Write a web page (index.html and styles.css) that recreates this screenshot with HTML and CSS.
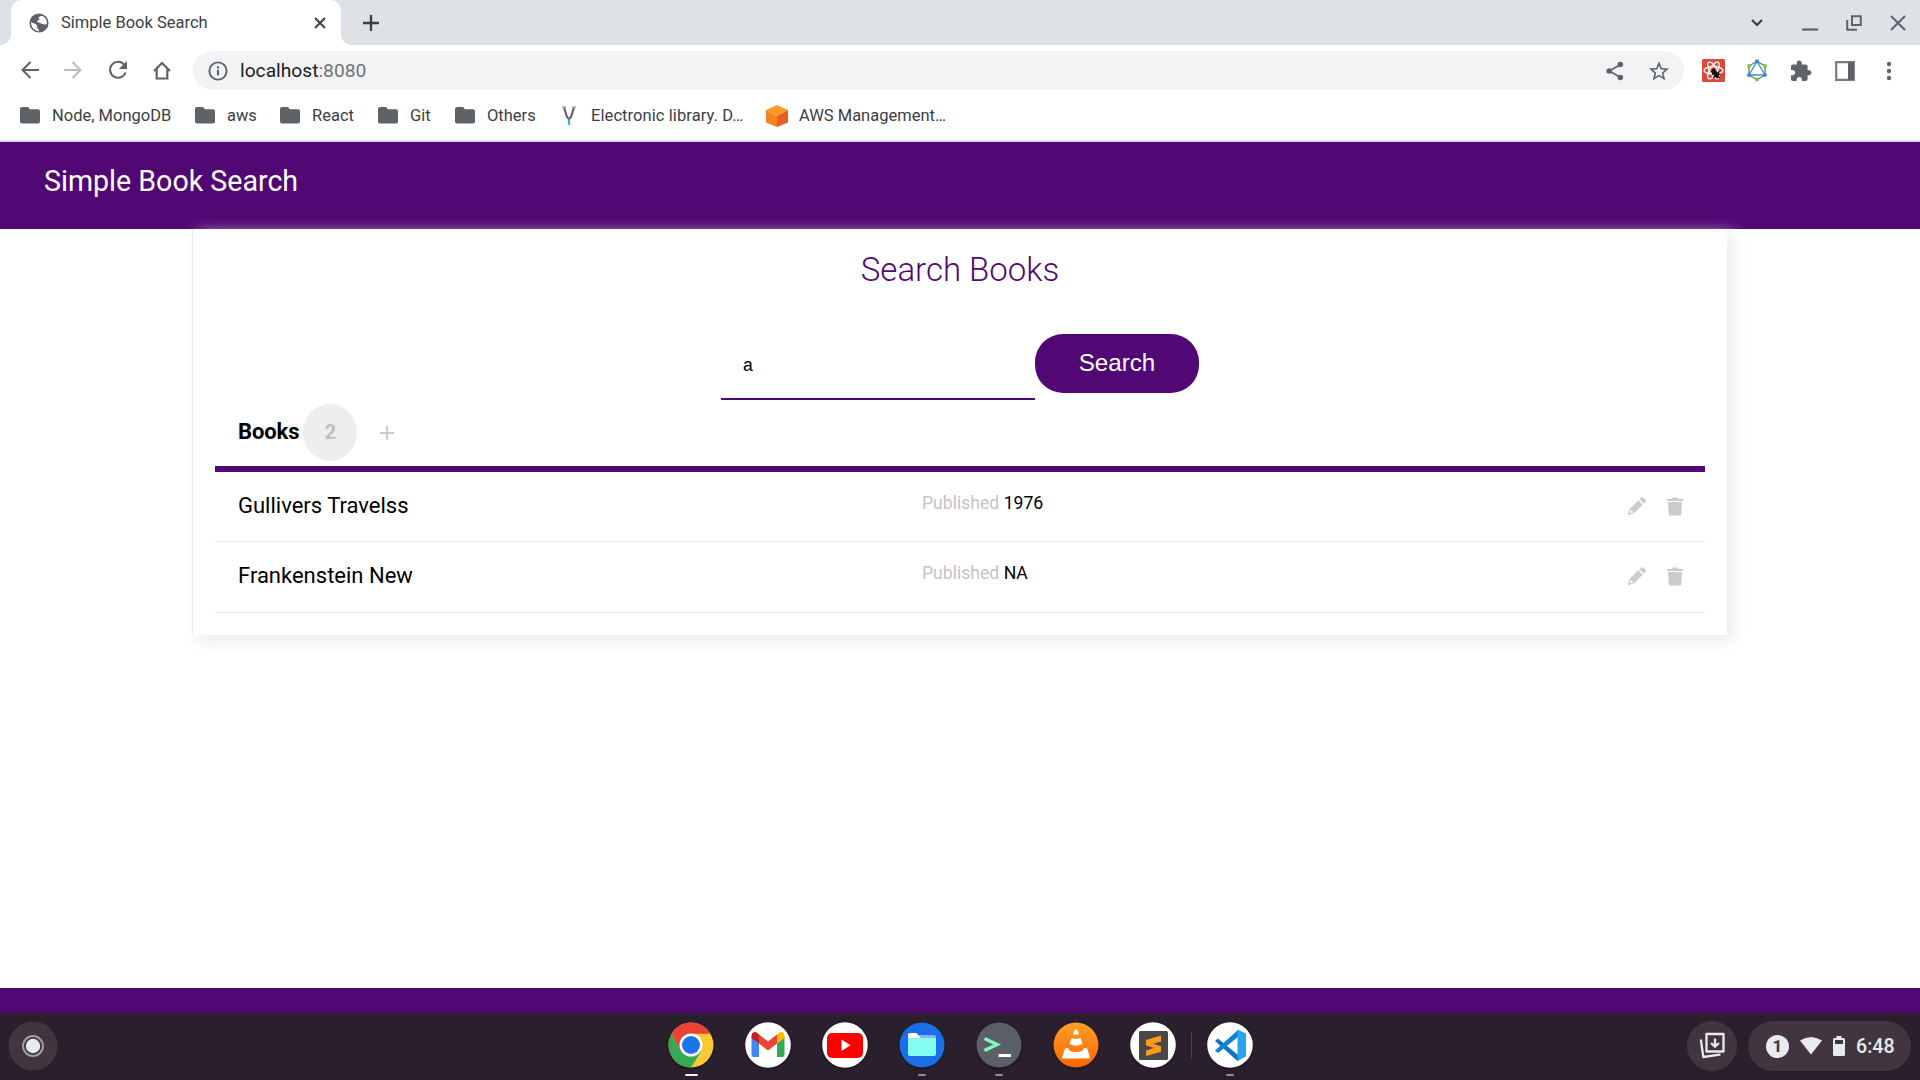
FILE: index.html
```html
<!DOCTYPE html>
<html lang="en">
<head>
<meta charset="utf-8">
<title>Simple Book Search</title>
<link rel="stylesheet" href="styles.css">
</head>
<body>
<div class="browser">
  <div class="tabstrip">
    <div class="tab">
      <svg class="globe" viewBox="0 0 20 20"><circle cx="10" cy="10" r="9.600" fill="#5f6368"/><path d="M2 9.300c1.500 1 4.200 1 5.700 2.600.9 1-.2 2.500.8 3.400.7.700 1.500 1 1.500 2.900C5.500 18 2 14.400 2 9.300zM9.600 4.100c1.500-.4 2.300-1.200 3.700-1.300 2.800 1.500 4.500 4.200 4.700 7.200-.6 1.200-1.700 1.900-3 1.400-1.500-.6-2.600-.4-3.700-1.300-.8-.8-2.300-.4-3-1.400-.6-1.200 1.400-1.500 2.200-2.300.5-.8-1.500-.9-.9-2.300z" fill="#fff"/></svg>
      <span class="tab-title">Simple Book Search</span>
      <svg class="tab-close" viewBox="0 0 12 12"><path d="M1 1l10 10M11 1L1 11" stroke="#3c4043" stroke-width="2"/></svg>
    </div>
    <svg class="new-tab" viewBox="0 0 18 18"><path d="M9 1v16M1 9h16" stroke="#3c4043" stroke-width="2.300"/></svg>
    <div class="window-controls">
      <svg width="14" height="10" viewBox="0 0 14 10"><path d="M2 2l5 5 5-5" fill="none" stroke="#3c4043" stroke-width="2.200"/></svg>
      <svg class="minimize" width="16" height="16" viewBox="0 0 16 16"><path d="M0 14.500h16" stroke="#5f6368" stroke-width="2.200"/></svg>
      <svg class="restore" width="16" height="16" viewBox="0 0 16 16"><path d="M6 1.200h8.800V10H6zM1.200 5v9.800H11" fill="none" stroke="#5f6368" stroke-width="2"/></svg>
      <svg class="close" width="16" height="16" viewBox="0 0 16 16"><path d="M1 1l14 14M15 1L1 15" stroke="#5f6368" stroke-width="2"/></svg>
    </div>
  </div>
  <div class="toolbar">
    <div class="nav">
      <svg width="18" height="18" viewBox="0 0 18 18"><path d="M18 9H1.500M9.500 1l-8 8 8 8" fill="none" stroke="#5f6368" stroke-width="2"/></svg>
      <svg width="18" height="18" viewBox="0 0 18 18"><path d="M0 9h16.500M8.500 1l8 8-8 8" fill="none" stroke="#babcbe" stroke-width="2"/></svg>
      <svg width="20" height="20" viewBox="0 0 20 20"><path d="M16.500 5A8 8 0 1 0 17.600 12.500" fill="none" stroke="#5f6368" stroke-width="2.100"/><path d="M19 1v8h-8z" fill="#5f6368"/></svg>
      <svg width="18" height="19" viewBox="0 0 18 19"><path d="M1 10l8-8 8 8M3.700 8v9.500h10.600V8" fill="none" stroke="#5f6368" stroke-width="2.200"/></svg>
    </div>
    <div class="omnibox">
      <svg width="20" height="20" viewBox="0 0 20 20"><circle cx="10" cy="10" r="8.600" fill="none" stroke="#5f6368" stroke-width="1.900"/><path d="M10 8.800v5.500M10 5.300v2.200" stroke="#5f6368" stroke-width="2.100"/></svg>
      <span class="url">localhost<span class="port">:8080</span></span>
      <svg class="share" width="18" height="20" viewBox="0 0 18 20"><path d="M14.500 3.500L3.500 10l11 6.500" fill="none" stroke="#5f6368" stroke-width="1.700"/><g fill="#5f6368"><circle cx="14.300" cy="3.500" r="2.800"/><circle cx="3.200" cy="10" r="2.800"/><circle cx="14.300" cy="16.500" r="2.800"/></g></svg>
      <svg width="20" height="20" viewBox="0 0 24 24"><path d="M22 9.240l-7.190-.62L12 2 9.190 8.630 2 9.240l5.460 4.730L5.820 21 12 17.270 18.180 21l-1.630-7.030L22 9.240zM12 15.400l-3.760 2.270 1-4.280-3.320-2.880 4.380-.38L12 6.100l1.710 4.040 4.380.38-3.320 2.880 1 4.280L12 15.400z" transform="translate(-2.400 -2) scale(1.200)" fill="#5f6368"/></svg>
    </div>
    <div class="extensions">
      <svg width="23" height="23" viewBox="0 0 23 23"><rect width="23" height="23" rx="1.500" fill="#de4a3a"/><g fill="none" stroke="#fff" stroke-width="1.300"><ellipse cx="11.500" cy="11.500" rx="9.500" ry="3.800"/><ellipse cx="11.500" cy="11.500" rx="9.500" ry="3.800" transform="rotate(60 11.500 11.500)"/><ellipse cx="11.500" cy="11.500" rx="9.500" ry="3.800" transform="rotate(120 11.500 11.500)"/></g><path d="M9 12l9 7M12.500 11l-2.500 5M17 12l-2 7.500M11.500 19l2.500-5 4.500 1.500" stroke="#111" stroke-width="1.200"/><ellipse cx="13.800" cy="15" rx="2.200" ry="4.200" transform="rotate(-40 13.800 15)" fill="#111"/><circle cx="11.500" cy="11" r="1.600" fill="#111"/></svg>
      <svg width="22" height="23" viewBox="0 0 22 23"><path d="M11 2.500L19 7v9l-8 4.800L3 16V7z" fill="none" stroke="#777" stroke-width="1.300"/><path d="M11 2.500L19 16H3z" fill="none" stroke="#3a93d1" stroke-width="1.400"/><g fill="#2f8fd3"><circle cx="11" cy="2.300" r="2"/><circle cx="3" cy="16" r="2"/><circle cx="19" cy="16" r="2"/></g><g fill="#76c650"><circle cx="3" cy="7" r="2"/><circle cx="19" cy="7" r="2"/><circle cx="11" cy="20.600" r="2"/></g></svg>
      <svg width="22" height="22" viewBox="1 0.500 22.500 22.500"><path d="M20.500 11H19V7c0-1.100-.9-2-2-2h-4V3.500a2.500 2.500 0 0 0-5 0V5H4c-1.100 0-1.990.9-1.990 2v3.800H3.500c1.490 0 2.700 1.210 2.700 2.700s-1.210 2.700-2.700 2.700H2V20c0 1.100.9 2 2 2h3.800v-1.500c0-1.490 1.210-2.700 2.700-2.700s2.700 1.210 2.700 2.700V22H17c1.100 0 2-.9 2-2v-4h1.500a2.500 2.500 0 0 0 0-5z" fill="#5f6368"/></svg>
      <svg width="20" height="20" viewBox="0 0 20 20"><path d="M1.200 1.200h17.600v17.600H1.200z" fill="#fff" stroke="#777b80" stroke-width="2.200"/><path d="M13 1h6v18h-6z" fill="#5f6368"/></svg>
      <svg width="6" height="20" viewBox="0 0 6 20"><g fill="#5f6368"><circle cx="3" cy="3" r="2.200"/><circle cx="3" cy="10" r="2.200"/><circle cx="3" cy="17" r="2.200"/></g></svg>
    </div>
  </div>
  <div class="bookmarks">
    <span class="bookmark b-node"><svg class="folder" viewBox="0 0 20 17"><path d="M2 0h6l2 2.300h8a2 2 0 0 1 2 2V14.500a2 2 0 0 1-2 2H2a2 2 0 0 1-2-2V2a2 2 0 0 1 2-2z"/></svg>Node, MongoDB</span>
    <span class="bookmark b-aws"><svg class="folder" viewBox="0 0 20 17"><path d="M2 0h6l2 2.300h8a2 2 0 0 1 2 2V14.500a2 2 0 0 1-2 2H2a2 2 0 0 1-2-2V2a2 2 0 0 1 2-2z"/></svg>aws</span>
    <span class="bookmark b-react"><svg class="folder" viewBox="0 0 20 17"><path d="M2 0h6l2 2.300h8a2 2 0 0 1 2 2V14.500a2 2 0 0 1-2 2H2a2 2 0 0 1-2-2V2a2 2 0 0 1 2-2z"/></svg>React</span>
    <span class="bookmark b-git"><svg class="folder" viewBox="0 0 20 17"><path d="M2 0h6l2 2.300h8a2 2 0 0 1 2 2V14.500a2 2 0 0 1-2 2H2a2 2 0 0 1-2-2V2a2 2 0 0 1 2-2z"/></svg>Git</span>
    <span class="bookmark b-others"><svg class="folder" viewBox="0 0 20 17"><path d="M2 0h6l2 2.300h8a2 2 0 0 1 2 2V14.500a2 2 0 0 1-2 2H2a2 2 0 0 1-2-2V2a2 2 0 0 1 2-2z"/></svg>Others</span>
    <span class="bookmark b-library"><svg width="14" height="20" viewBox="0 0 14 20"><path d="M2 1.500l3 9.500 2 2 2-2 3-9.500" fill="none" stroke="#666" stroke-width="2.200"/><path d="M0 1h4M10 1h4" stroke="#888"/><path d="M7 13.800v5.200" stroke="#36b3de" stroke-width="2.400"/></svg>Electronic library. D…</span>
    <span class="bookmark b-console"><svg width="22" height="22" viewBox="0 0 22 22"><path d="M11 0l11 5-11 6L0 5z" fill="#fb9a2c"/><path d="M0 5l11 6v11L0 17.500z" fill="#f58320"/><path d="M22 5l-11 6v11l11-4.500z" fill="#ea5f20"/></svg>AWS Management…</span>
  </div>
</div>
<div class="page">
  <header class="site-header">Simple Book Search</header>
  <main class="card">
    <h1 class="heading">Search Books</h1>
    <form class="search-form">
      <input class="search-input" type="text" value="a">
      <button class="search-button" type="button">Search</button>
    </form>
    <div class="list-head">
      <span class="list-title">Books</span>
      <span class="count">2</span>
      <svg class="add" viewBox="0 0 14 14"><path d="M7 0v14M0 7h14" stroke="#ccc" stroke-width="2"/></svg>
    </div>
    <div class="book">
      <span class="book-title">Gullivers Travelss</span>
      <span class="published">Published <span class="year">1976</span></span>
      <span class="actions">
        <svg class="pencil" viewBox="0 0 18 18"><path d="M10.300 3.300l4.400 4.400-8.500 8.500L1 18H0v-1l1.600-5z"/><path d="M11.500 2.200L13 .8q1.300-1.300 2.700 0l1.600 1.600q1.300 1.300 0 2.700l-1.500 1.400z"/><path d="M2.500 12.800l2.700 2.700-2 .7-1.400-1.400z" fill="#fff"/></svg>
        <svg class="trash" viewBox="0 0 16 19"><path d="M1 5h14l-.7 12q-.1 1.500-1.600 1.500H3.300q-1.500 0-1.600-1.500zM0 2h4.500L5.300.4h5.400l.8 1.600H16v1.900H0z"/></svg>
      </span>
    </div>
    <div class="book">
      <span class="book-title">Frankenstein New</span>
      <span class="published">Published <span class="year">NA</span></span>
      <span class="actions">
        <svg class="pencil" viewBox="0 0 18 18"><path d="M10.300 3.300l4.400 4.400-8.500 8.500L1 18H0v-1l1.600-5z"/><path d="M11.500 2.200L13 .8q1.300-1.300 2.700 0l1.600 1.600q1.300 1.300 0 2.700l-1.500 1.400z"/><path d="M2.500 12.800l2.700 2.700-2 .7-1.400-1.400z" fill="#fff"/></svg>
        <svg class="trash" viewBox="0 0 16 19"><path d="M1 5h14l-.7 12q-.1 1.500-1.600 1.500H3.300q-1.500 0-1.600-1.500zM0 2h4.500L5.300.4h5.400l.8 1.600H16v1.900H0z"/></svg>
      </span>
    </div>
  </main>
  <footer class="site-footer"></footer>
</div>
<div class="shelf">
  <div class="shelf-left">
    <svg class="launcher" viewBox="0 0 50 50"><circle cx="25" cy="25" r="24.500" fill="#41363f"/><circle cx="25" cy="25" r="10" fill="none" stroke="#a09ca1" stroke-width="2"/><circle cx="25" cy="25" r="7.200" fill="#e8eaed"/></svg>
  </div>
  <div class="apps">
    <div class="app active"><svg viewBox="0 0 46 46"><circle cx="23" cy="23" r="22.500" fill="#fbc934"/><path d="M23 23L12.600 29 3.500 12A22.500 22.500 0 0 0 23 45.500l10.400-16.500z" fill="#34a853"/><path d="M3.500 11.800a22.500 22.500 0 0 1 39-.1H23L12.600 29z" fill="#ea4335"/><circle cx="23" cy="23" r="11.500" fill="#fff"/><circle cx="23" cy="23" r="9" fill="#1a73e8"/></svg></div>
    <div class="app"><svg viewBox="0 0 46 46"><circle cx="23" cy="23" r="22.800" fill="#fff"/><path d="M6.500 15l7.500 5.500V35H9q-2.500 0-2.500-2.500z" fill="#4285f4"/><path d="M39.500 15L32 20.500V35h5q2.500 0 2.500-2.500z" fill="#34a853"/><path d="M14 12.500l9 7 9-7v9l-9 7-9-7z" fill="#ea4335"/><path d="M6.500 16v-2q0-4 4-4 1.500 0 3.500 2.500v9z" fill="#c5221f"/><path d="M39.500 16v-2q0-4-4-4-1.500 0-3.500 2.500v9z" fill="#fbbc04"/></svg></div>
    <div class="app"><svg viewBox="0 0 46 46"><circle cx="23" cy="23" r="22.800" fill="#fff"/><rect x="5" y="11" width="36" height="25" rx="5" fill="#f00"/><path d="M19.500 17.500v11.500l9-5.800z" fill="#fff"/></svg></div>
    <div class="app open"><svg viewBox="0 0 46 46"><circle cx="23" cy="23" r="22.500" fill="#1a6fe6"/><path d="M20 13h15q2 0 2 2v4H20z" fill="#86b3f8"/><path d="M9 17v-4q0-2 2-2h6.500l4 4.500V18z" fill="#fff"/><path d="M9 16h28v16q0 2-2 2H11q-2 0-2-2z" fill="#83fcf2"/></svg></div>
    <div class="app open"><svg viewBox="0 0 46 46"><circle cx="23" cy="23" r="22.500" fill="#5a6066"/><path d="M8.500 16.500l12.500 6-12.500 6" fill="none" stroke="#80f7c0" stroke-width="3.500"/><path d="M22.500 33.500H35" stroke="#fff" stroke-width="3"/></svg></div>
    <div class="app"><svg viewBox="0 0 46 46"><defs><linearGradient id="orange" x1="0" y1="0" x2="0" y2="1"><stop stop-color="#ffa029"/><stop offset="1" stop-color="#ff6500"/></linearGradient></defs><circle cx="23" cy="23" r="22.500" fill="url(#orange)"/><g fill="#fff"><path d="M21 9.500q2-5 4 0l1 2.500q-3 1.500-6 0z"/><path d="M18.500 16q4.500 2 9 0l2 6q-6.500 3.500-13 0z"/><path d="M14 26h1.200q0 4 7.800 4t7.800-4H33q1 0 1.500 1.500l2.500 8q.3 1-1 1H10q-1.300 0-1-1l2.500-8Q12 26 14 26z"/></g></svg></div>
    <div class="app"><svg viewBox="0 0 46 46"><circle cx="23" cy="23" r="22.800" fill="#fff"/><rect x="9" y="9" width="29" height="29" rx="1.500" fill="#484848"/><path d="M16 18l15-4.500v6l-8 2.200 8 2.500v5.500L16 34v-5.500l8-2.500-8-2.500z" fill="#ff9a1f"/></svg></div>
    <div class="divider"></div>
    <div class="app open"><svg viewBox="0 0 46 46"><circle cx="23" cy="23" r="22.800" fill="#fff"/><path d="M8 19l3-2.500L31 33v6.500z" fill="#0b74c4"/><path d="M8 28.500l3 2.500L31 15V8z" fill="#1082d2"/><path d="M30.500 7.500l8.500 4v23l-8.500 4.500z" fill="#2aa2f0"/></svg></div>
  </div>
  <div class="tray">
    <svg class="holding" viewBox="0 0 50 50"><circle cx="25" cy="25" r="25" fill="#41363f"/><path d="M19.500 13h17v17.500h-17zM14 19.500l2.300 16.500 16.200-2.300" fill="none" stroke="#e8eaed" stroke-width="2.300" stroke-linejoin="round" stroke-linecap="round"/><path d="M28 17.500v8M24 22l4 3.700 4-3.700" fill="none" stroke="#e8eaed" stroke-width="2.300"/></svg>
    <div class="status">
      <span class="badge">1</span>
      <svg class="wifi" viewBox="0 0 22 18"><path d="M0 3.500Q11-3.500 22 3.500L11 17.500z" fill="#e8eaed"/></svg>
      <svg class="battery" viewBox="0 0 12 20"><path d="M3.500 0h5v2H10.500q1.500 0 1.500 1.500v15q0 1.500-1.500 1.500h-9Q0 20 0 18.500v-15Q0 2 1.500 2h2zM2 4v4h8V4z" fill="#e8eaed" fill-rule="evenodd"/></svg>
      <span class="clock">6:48</span>
    </div>
  </div>
</div>
</body>
</html>
```
FILE: styles.css
```css
* { box-sizing: border-box; }
body {
  margin: 0;
  width: 1920px;
  height: 1080px;
  overflow: hidden;
  display: flex;
  flex-direction: column;
  font-family: Roboto, "Liberation Sans", sans-serif;
  background: #fff;
}
svg { display: block; flex: none; }

.browser { height: 142px; border-bottom: 2px solid #dadce0; background: #fff; color: #3c4043; }
.tabstrip { height: 45px; display: flex; align-items: center; background: #dee1e6; padding-left: 11px; }
.tab {
  width: 330px;
  height: 45px;
  display: flex;
  align-items: center;
  padding: 0 15.500px 0 18px;
  background: #fff;
  border-radius: 10px 10px 0 0;
  position: relative;
}
.tab::before, .tab::after {
  content: "";
  position: absolute;
  bottom: 0;
  width: 10px;
  height: 10px;
}
.tab::before { left: -10px; background: radial-gradient(circle at 0 0, transparent 9.500px, #fff 10px); }
.tab::after { right: -10px; background: radial-gradient(circle at 100% 0, transparent 9.500px, #fff 10px); }
.globe { width: 20px; height: 20px; margin-right: 12px; }
.tab-title { font-size: 16.500px; flex: 1; }
.tab-close { width: 12px; height: 12px; }
.new-tab { width: 18px; height: 18px; margin-left: 21px; }
.window-controls { margin-left: auto; display: flex; align-items: center; padding-right: 14px; }
.minimize { margin-left: 38px; }
.restore { margin-left: 28px; }
.close { margin-left: 28px; }

.toolbar { height: 51px; display: flex; align-items: center; }
.nav { width: 193px; padding: 0 22px 1px 21px; display: flex; align-items: center; justify-content: space-between; }
.omnibox {
  width: 1491px;
  height: 39px;
  border-radius: 20px;
  background: #f1f3f4;
  display: flex;
  align-items: center;
  padding: 0 15px;
}
.url { flex: 1; margin-left: 12px; padding-bottom: 1px; font-size: 19.200px; color: #202124; }
.port { color: #6f7377; }
.share { margin-right: 25px; }
.extensions {
  display: grid;
  grid-template-columns: repeat(5, 44px);
  justify-items: center;
  align-items: center;
  padding-left: 7px;
}

.bookmarks { display: flex; height: 39px; align-items: center; padding-left: 20px; }
.bookmark { display: flex; align-items: center; gap: 12px; font-size: 16.500px; white-space: nowrap; }
.folder { width: 20px; height: 17px; fill: #5f6368; }
.b-node { width: 175px; }
.b-aws { width: 85px; }
.b-react { width: 98px; }
.b-git { width: 77px; }
.b-others { width: 107px; }
.b-library { width: 204px; gap: 15px; letter-spacing: 0.080px; }
.b-console { gap: 11px; }

.page { height: 871px; display: flex; flex-direction: column; }
.site-header {
  height: 87px;
  flex: none;
  padding-left: 44px;
  line-height: 78px;
  font-size: 28.600px;
  color: #fff;
  background: #510774;
}
.card {
  width: 1535px;
  height: 406px;
  margin: 0 0 0 192px;
  padding: 0 22px;
  border-left: 1px solid #eee;
  background: #fff;
  box-shadow: 6px 6px 16px #eaeaea;
}
.heading {
  margin: 0;
  padding-top: 20px;
  height: 105px;
  font-size: 33px;
  line-height: 42px;
  font-weight: 300;
  text-align: center;
  color: #510774;
}
.search-form { display: flex; justify-content: center; align-items: flex-start; height: 67px; }
.search-input {
  width: 314px;
  height: 66px;
  padding: 0 22px 2px;
  border: 0;
  border-bottom: 2px solid #510774;
  font: 17.600px "Liberation Sans", Arial, sans-serif;
  outline: 0;
  background: none;
}
.search-button {
  width: 164px;
  height: 59px;
  padding: 0 0 2px;
  border: 0;
  border-radius: 28px;
  background: #510774;
  color: #fff;
  font: 24.200px "Liberation Sans", Arial, sans-serif;
}
.list-head {
  height: 71px;
  display: flex;
  align-items: flex-start;
  padding: 3px 22px 0 23px;
  border-bottom: 6px solid #510774;
  font-weight: 700;
}
.list-title { font-size: 22px; line-height: 56px; letter-spacing: -0.100px; }
.count {
  width: 54px;
  height: 57px;
  margin-left: 4px;
  border-radius: 50%;
  background: #eee;
  color: #bdbdbd;
  font-size: 19.800px;
  line-height: 57px;
  text-align: center;
}
.add { width: 14px; height: 14px; margin: 21.500px 0 0 23px; }
.book {
  height: 70px;
  display: grid;
  grid-template-columns: 684px 1fr auto;
  padding: 0 22px 0 23px;
  border-bottom: 1px solid #e9e9e9;
}
.book:last-child { height: 71px; }
.book-title { font-size: 22px; line-height: 68px; }
.published { font-size: 17.600px; line-height: 63px; color: #c4c4c4; }
.year { color: #000; }
.actions { display: flex; gap: 21.500px; padding-top: 25px; fill: #ccc; }
.pencil { width: 18px; height: 18px; }
.trash { width: 16px; height: 19px; }
.site-footer { height: 25px; flex: none; margin-top: auto; background: #510774; }

.shelf {
  height: 67px;
  display: grid;
  grid-template-columns: 1fr auto 1fr;
  background: #2a202d;
  color: #e8eaed;
}
.shelf-left { padding: 8px 0 0 8px; }
.launcher { width: 50px; height: 50px; }
.apps { display: flex; gap: 31px; padding: 9px 0 0 1px; }
.app { width: 46px; height: 58px; display: flex; flex-direction: column; align-items: center; }
.app svg { width: 46px; height: 46px; filter: drop-shadow(0 1px 1px #0008); }
.app.active::after, .app.open::after { content: ""; height: 2px; margin-top: 6px; border-radius: 1px; }
.app.active::after { width: 13px; background: #f1f1f1; }
.app.open::after { width: 8px; background: #918c93; }
.divider { width: 1px; height: 27px; margin: 10px -16px 0; background: #494150; }
.tray { display: flex; justify-content: flex-end; padding: 8px 9px 0 0; gap: 11px; }
.holding { width: 50px; height: 50px; }
.status { width: 163px; height: 50px; border-radius: 25px; background: #41363f; display: flex; align-items: center; padding-left: 18px; }
.badge { width: 23px; height: 23px; border-radius: 50%; background: #e8eaed; color: #41363f; font-size: 17px; line-height: 23px; font-weight: 700; text-align: center; }
.wifi { width: 22px; height: 18px; margin-left: 11px; }
.battery { width: 12px; height: 20px; margin-left: 11px; }
.clock { margin-left: 11px; font-size: 19.600px; font-weight: 500; }
```
